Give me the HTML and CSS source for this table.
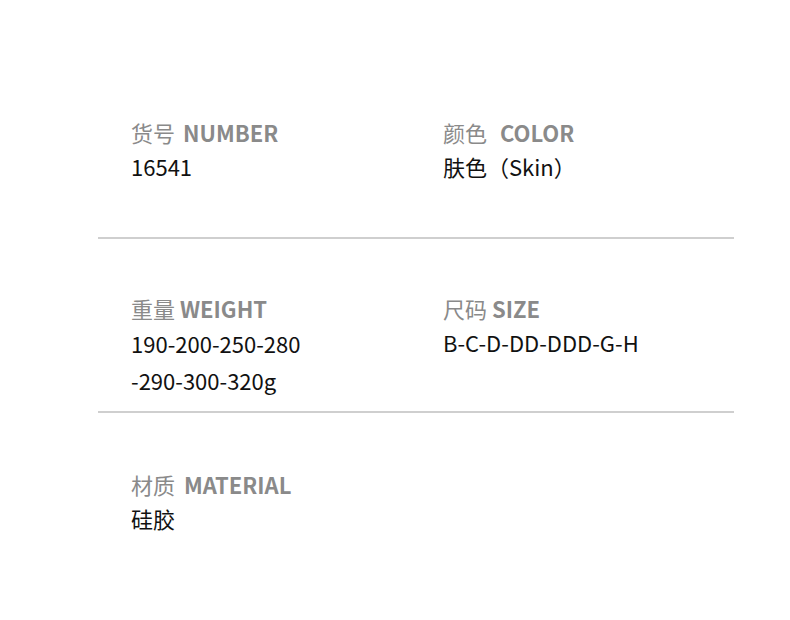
FILE: index.html
```html
<!DOCTYPE html>
<html lang="zh">
<head>
<meta charset="utf-8">
<link rel="stylesheet" href="styles.css">
</head>
<body>
<div class="page">
  <section class="row row-first">
    <div class="item">
      <div class="label"><span class="zh">货号</span> <b class="wide">NUMBER</b></div>
      <div class="value">16541</div>
    </div>
    <div class="item">
      <div class="label"><span class="zh">颜色</span>&nbsp; <b class="wide">COLOR</b></div>
      <div class="value">肤色（Skin）</div>
    </div>
  </section>
  <section class="row row-mid">
    <div class="item">
      <div class="label"><span class="zh">重量</span> <b>WEIGHT</b></div>
      <div class="value multi">190-200-250-280<br>-290-300-320g</div>
    </div>
    <div class="item">
      <div class="label"><span class="zh">尺码</span> <b>SIZE</b></div>
      <div class="value">B-C-D-DD-DDD-G-H</div>
    </div>
  </section>
  <section class="row row-last">
    <div class="item">
      <div class="label"><span class="zh">材质</span>&nbsp; <b class="tight">MATERIAL</b></div>
      <div class="value">硅胶</div>
    </div>
  </section>
</div>
</body>
</html>
```

FILE: styles.css
```css
html, body {
  margin: 0;
  padding: 0;
  background: #fff;
}
.page {
  width: 790px;
  height: 620px;
  font-family: "Noto Sans CJK SC", "Noto Sans", sans-serif;
  font-size: 22px;
  color: #111;
}
.row {
  margin: 0 56px 0 98px;
  display: grid;
  grid-template-columns: 312px 1fr;
  padding-left: 33px;
  box-sizing: border-box;
  align-content: start;
}
.row-first {
  height: 239px;
  padding-top: 115px;
  border-bottom: 2px solid #cfcfcf;
}
.row-mid {
  height: 174px;
  padding-top: 52px;
  border-bottom: 2px solid #cfcfcf;
}
.row-last {
  padding-top: 54px;
}
.label {
  line-height: 34px;
  color: #8a8a8a;
  white-space: nowrap;
}
.label b {
  font-weight: 700;
}
.label b.wide {
  margin-left: 3px;
}
.label b.tight {
  margin-left: -1px;
}
.value {
  line-height: 34px;
  white-space: nowrap;
}
.value.multi {
  line-height: 37px;
}
```
